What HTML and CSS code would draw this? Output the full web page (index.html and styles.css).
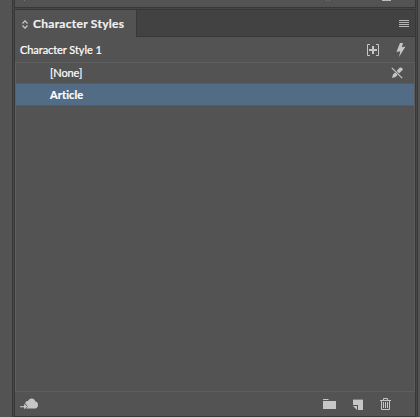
FILE: index.html
```html
<!DOCTYPE html>
<html lang="en">
<head>
<meta charset="utf-8">
<title>Character Styles</title>
<link rel="stylesheet" href="styles.css">
</head>
<body>
<div class="workspace">
  <div class="previous-panel">
    <i class="remnant remnant-left"></i><i class="remnant remnant-mid"></i><i class="remnant remnant-mid"></i><i class="remnant remnant-right"></i>
  </div>
  <section class="panel">
    <header class="tabs">
      <div class="tab">
        <svg width="6" height="9" viewBox="0 0 6 9"><path d="M.5 3.500 3 .8l2.500 2.700M.5 5.500 3 8.200l2.500-2.700" fill="none" stroke="#c8c8c8" stroke-width="1.200"/></svg>
        <h1 class="tab-title">Character Styles</h1>
      </div>
      <div class="tab-rest">
        <svg width="10" height="8" viewBox="0 0 10 8"><path d="M0 .5h10M0 2.500h10M0 4.500h10M0 6.500h10" stroke="#b5b5b5"/></svg>
      </div>
    </header>
    <div class="current">
      <span class="current-name">Character Style 1</span>
      <svg class="add" width="12" height="12" viewBox="0 0 12 12" fill="none" stroke="#c6c6c6"><path d="M3 .5H.5v11H3M9 .5h2.500v11H9"/><path d="M2 6h8M6 2v8" stroke-width="2"/></svg>
      <svg width="10" height="14" viewBox="0 0 10 14"><path d="M4 0h3L5.800 4.300l3.700-.8L3 14l1.300-5.700L.4 9z" fill="#c6c6c6"/></svg>
    </div>
    <div class="list">
      <div class="row"><span class="none">[None]</span>
        <svg width="12" height="12" viewBox="0 0 12 12"><path d="M1 11 2 7.500 7.500 2Q9-.2 11 1t-1 3.500L4.500 10z" fill="#c6c6c6"/><path d="M1 .5 11.500 11.500" stroke="#535353" stroke-width="2.200"/><path d="M.8.8 11.200 11.200" stroke="#c6c6c6" stroke-width="1.200"/></svg>
      </div>
      <div class="row selected"><span class="article">Article</span></div>
    </div>
    <footer class="actions">
      <svg class="cloud" width="19" height="12" viewBox="0 0 19 12"><path d="M5.500 10.500Q8 9.500 7 7 5 6.500 5.300 4.500 6 2.500 8 3 9 .3 11.500.4q3 .1 3.700 2.800Q18 4 18 6.800q0 3.700-3 3.700z" fill="#c6c6c6"/><path d="M0 8h4V5.500L7.500 8.500 4 11.500V9.500H0z" fill="#d0d0d0" stroke="#535353" stroke-width=".4"/></svg>
      <svg class="folder" width="13" height="10" viewBox="0 0 13 10"><path d="M0 0h5l1 1H0zM0 2h13v8H0z" fill="#c6c6c6"/></svg>
      <svg class="new" width="10" height="11" viewBox="0 0 10 11"><path d="M0 0h10v1H0z" fill="#808080"/><path d="M0 1h10v10H5V6H0z" fill="#c6c6c6"/><path d="M0 7h4v4z" fill="#c6c6c6"/></svg>
      <svg class="trash" width="11" height="12" viewBox="0 0 11 12" fill="none" stroke="#c6c6c6"><path d="M0 2.500h11M3.500 2V.5h4V2M1.500 3v8.500h8V3M3.500 4v6M5.500 4v6M7.500 4v6"/></svg>
    </footer>
  </section>
</div>
</body>
</html>
```
FILE: styles.css
```css
* { box-sizing: border-box; }
body { margin: 0; background: #535353; font-family: Lato, "Liberation Sans", sans-serif; font-variant-ligatures: none; color: #fff; }
svg { display: block; flex: none; }
.workspace { width: 406px; height: 417px; margin-left: 12px; border-left: 1px solid #383838; border-right: 1px solid #383838; background: #464646; padding: 0 1px; display: flex; flex-direction: column; gap: 1px; }
.previous-panel { height: 8px; background: #535353; border: 1px solid #383838; border-top: 0; display: flex; align-items: flex-start; }
.remnant { height: 1px; background: #777; width: 1px; }
.remnant-left { margin-left: 9px; }
.remnant-mid { margin-left: 2px; }
.remnant-left + .remnant-mid { margin-left: 301px; }
.remnant-right { width: 9px; margin-left: 52px; background: #bdbdbd; }
.panel { height: 408px; border: 1px solid #383838; background: #535353; display: flex; flex-direction: column; }
.tabs { height: 27px; display: flex; flex: none; }
.tab { width: 121px; display: flex; align-items: center; padding: 1px 0 0 7px; gap: 5px; }
.tab-title { font-size: 12px; line-height: 16px; font-weight: 700; letter-spacing: .28px; margin: 0; color: #f0f0f0; -webkit-text-stroke: .2px #f0f0f0; white-space: nowrap; }
.tab-rest { flex: 1; background: #424242; border-left: 1px solid #383838; border-bottom: 1px solid #383838; display: flex; justify-content: flex-end; padding: 10px 6px 0 0; }
.current { height: 25px; flex: none; display: flex; align-items: center; padding: 0 9px 0 5px; }
.current-name { font-size: 11px; letter-spacing: -.06px; -webkit-text-stroke: .2px #fff; white-space: nowrap; }
.add { margin: 0 17px 0 auto; }
.list { flex: 1; border: 1px solid #5e5e5e; border-right-color: #5b5b5b; }
.row { height: 21px; display: flex; align-items: center; justify-content: space-between; padding: 0 11px 1px 34px; font-size: 11px; border-bottom: 1px solid #5b5b5b; }
.none { letter-spacing: -.1px; -webkit-text-stroke: .2px #fff; }
.article { letter-spacing: .12px; -webkit-text-stroke: .2px #fff; }
.row.selected { height: 22px; background: #526c85; font-weight: 700; }
.actions { height: 24px; flex: none; display: flex; align-items: center; padding: 0 24px 0 5px; }
.folder { margin: 0 17px 0 auto; }
.new { margin-right: 17px; }
```
